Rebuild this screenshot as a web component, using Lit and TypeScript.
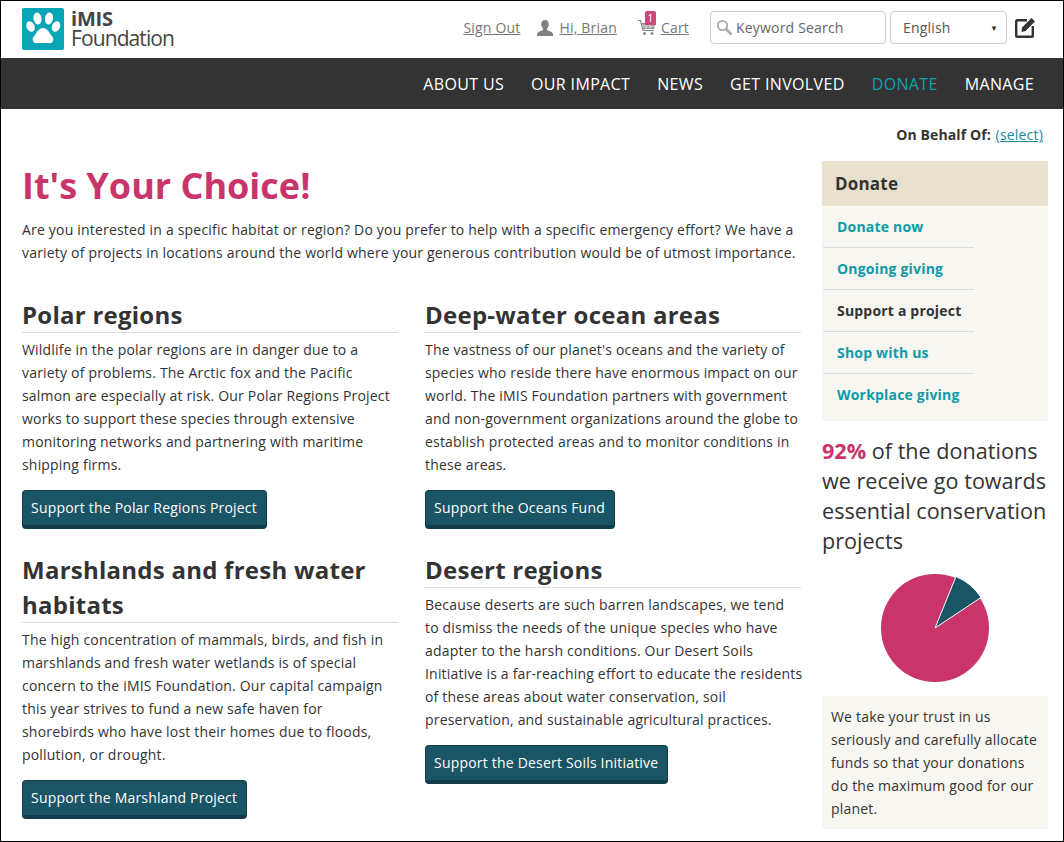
import { LitElement, html, css } from "lit";
import { customElement } from "lit/decorators.js";

const sections = [
  { h: "Polar regions", p: ["Wildlife in the polar regions are in danger due to a", "variety of problems. The Arctic fox and the Pacific", "salmon are especially at risk. Our Polar Regions Project", "works to support these species through extensive", "monitoring networks and partnering with maritime", "shipping firms."], b: "Support the Polar Regions Project" },
  { h: "Deep-water ocean areas", p: ["The vastness of our planet's oceans and the variety of", "species who reside there have enormous impact on our", "world. The iMIS Foundation partners with government", "and non-government organizations around the globe to", "establish protected areas and to monitor conditions in", "these areas."], b: "Support the Oceans Fund" },
  { h: "Marshlands and fresh water habitats", p: ["The high concentration of mammals, birds, and fish in", "marshlands and fresh water wetlands is of special", "concern to the iMIS Foundation. Our capital campaign", "this year strives to fund a new safe haven for", "shorebirds who have lost their homes due to floods,", "pollution, or drought."], b: "Support the Marshland Project" },
  { h: "Desert regions", p: ["Because deserts are such barren landscapes, we tend", "to dismiss the needs of the unique species who have", "adapter to the harsh conditions. Our Desert Soils", "Initiative is a far-reaching effort to educate the residents", "of these areas about water conservation, soil", "preservation, and sustainable agricultural practices."], b: "Support the Desert Soils Initiative" },
];
const navItems = ["ABOUT US", "OUR IMPACT", "NEWS", "GET INVOLVED", "DONATE", "MANAGE"];
const sideItems = ["Donate now", "Ongoing giving", "Support a project", "Shop with us", "Workplace giving"];

@customElement("app-root")
export class AppRoot extends LitElement {
  static styles = css`
    :host { display: block; width: 1064px; height: 842px; box-sizing: border-box; border: 1px solid #000; overflow: hidden; font-family: "Open Sans", sans-serif; font-size: 14px; letter-spacing: 0.19px; color: #333; background: #fff; }
    * { box-sizing: border-box; }
    a { color: inherit; }
    .top { height: 57px; display: flex; align-items: center; padding: 0 27px 4px 21px; }
    .logo { display: flex; align-items: center; gap: 7px; margin-top: 2px; }
    .logo-text { color: #444; }
    .logo-text b { display: block; font-size: 20px; line-height: 19px; letter-spacing: -0.2px; }
    .logo-text span { display: block; font-size: 21px; line-height: 20px; letter-spacing: -0.9px; }
    .util { margin-left: auto; display: flex; align-items: center; color: #777; }
    .util a { color: #777; }
    .signout { margin-right: 17px; }
    .hi { display: flex; align-items: center; gap: 6px; margin-right: 21px; }
    .cart { display: flex; align-items: center; gap: 5px; position: relative; margin-right: 21px; }
    .badge { position: absolute; left: 7px; top: -7px; width: 11px; height: 14px; background: #c9497a; color: #fff; font-size: 10px; letter-spacing: 0; line-height: 14px; text-align: center; border-radius: 2px 2px 0 0; }
    .search { width: 176px; height: 33px; border: 1px solid #ccc; border-radius: 4px; display: flex; align-items: center; padding-left: 5px; gap: 3px; margin-right: 4px; color: #666; }
    .select { width: 117px; height: 33px; border: 1px solid #ccc; border-radius: 4px; display: flex; align-items: center; justify-content: space-between; padding: 0 8px 0 12px; color: #555; margin-right: 8px; }
    .select i { font-style: normal; font-size: 8px; color: #333; }
    .nav { height: 51px; background: #333; display: flex; justify-content: flex-end; align-items: center; gap: 27px; padding-right: 29px; color: #fff; font-size: 16px; letter-spacing: 0.35px; }
    .nav .on { color: #12a0ad; }
    .behalf { text-align: right; padding: 16px 20px 0 0; height: 52px; line-height: 19px; }
    .behalf b { letter-spacing: 0.1px; }
    .behalf a { color: #1a8a99; margin-left: 1px; }
    .body { display: grid; grid-template-columns: 779px 226px; gap: 21px; padding-left: 21px; }
    h1 { margin: 0; font-size: 36px; line-height: 50px; color: #c9356a; font-weight: 700; letter-spacing: 0; }
    .intro { margin: 7px 0 0; line-height: 23px; }
    .cols { display: grid; grid-template-columns: 376px 376px; column-gap: 27px; margin-top: 33px; align-items: start; }
    .sec h2 { margin: 0; font-size: 24px; line-height: 35px; font-weight: 700; border-bottom: 1px solid #ddd; letter-spacing: 0.25px; }
    .sec p { margin: 5px 0 14px; line-height: 23px; white-space: nowrap; }
    .sec { padding-bottom: 23px; }
    .btn { display: inline-block; height: 39px; background: #1a5566; color: #fff; border: 1px solid #123d4a; border-bottom-width: 4px; border-radius: 4px; padding: 0 9px 0 8px; line-height: 34px; font-size: 14px; letter-spacing: 0.2px; }
    .side-h { background: #e8e1cd; height: 45px; line-height: 45px; padding-left: 13px; font-size: 17px; font-weight: 700; }
    .side-list { background: #f7f6f1; height: 215px; padding-left: 1px; }
    .side-list div { width: 151px; height: 42px; line-height: 41px; padding-left: 14px; font-weight: 700; color: #0f9aa8; border-bottom: 1px solid #ddd; }
    .side-list div:last-child { border-bottom: 0; }
    .side-list div.cur { color: #333; }
    .stat { margin: 15px 0 0; font-size: 21.6px; line-height: 30px; letter-spacing: 0; }
    .stat b { color: #c9356a; }
    .pie { display: flex; justify-content: center; margin: 17px 0 0; padding-right: 1px; }
    .trust { background: #f7f6f1; margin-top: 13px; padding: 9px 9px; line-height: 23px; height: 133px; }
  `;

  render() {
    return html`
      <div class="top">
        <div class="logo">
          <svg width="42" height="42" viewBox="0 0 42 42"><rect width="42" height="42" rx="2" fill="#0aa5b5"/>
            <g fill="#fff"><ellipse cx="8.500" cy="18.500" rx="4" ry="5.500" transform="rotate(-25 8.500 18.500)"/><ellipse cx="15.500" cy="10.500" rx="4" ry="6" transform="rotate(-10 15.500 10.500)"/><ellipse cx="27" cy="10.500" rx="4" ry="6" transform="rotate(10 27 10.500)"/><ellipse cx="34" cy="18.500" rx="4" ry="5.500" transform="rotate(25 34 18.500)"/><path d="M21 20c4 0 6 4 8 7 2 2 3 4 2 6-1 3-4 2-6 2h-8c-2 0-5 1-6-2-1-2 0-4 2-6 2-3 4-7 8-7z"/></g></svg>
          <div class="logo-text"><b>iMIS</b><span>Foundation</span></div>
        </div>
        <div class="util">
          <a class="signout" href="#">Sign Out</a>
          <span class="hi"><svg width="16" height="16" viewBox="0 0 16 16"><path fill="#808080" d="M8 0c2.500 0 3.800 1.800 3.800 4.300 0 1.900-.8 3.300-1.800 4.200v1.500l4.500 2.100c1 .5 1.500 1.500 1.500 3.900H0c0-2.400.5-3.400 1.500-3.900L6 10V8.500c-1-.9-1.800-2.300-1.800-4.200C4.200 1.800 5.500 0 8 0z"/></svg><a href="#">Hi, Brian</a></span>
          <span class="cart"><svg width="18" height="17" viewBox="0 0 18 17"><path fill="none" stroke="#888" stroke-width="1.200" d="M0 1.500h2.500L5 11.500h11"/><path fill="#888" d="M3.500 4h14l-1.500 6H5z"/><path stroke="#fff" stroke-width=".7" d="M4 6h13M4.500 8h12M8 4v6M12 4v6"/><circle cx="6.500" cy="14.500" r="1.500" fill="#888"/><circle cx="14" cy="14.500" r="1.500" fill="#888"/></svg><span class="badge">1</span><a href="#">Cart</a></span>
          <div class="search"><svg width="17" height="17" viewBox="0 0 17 17" fill="none" stroke="#aaa"><circle cx="6.500" cy="6.500" r="4.700" stroke-width="1.800"/><path d="M10 10l5.500 5.500" stroke-width="2.600"/></svg>Keyword Search</div>
          <div class="select">English<i>▼</i></div>
          <svg width="21" height="21" viewBox="0 0 21 21" fill="none" stroke="#333" stroke-width="2.400"><path d="M12 3.200H2.200a1 1 0 0 0-1 1V18.800a1 1 0 0 0 1 1H16.800a1 1 0 0 0 1-1V9"/><path fill="#333" stroke="none" d="M7 10.500L16.500 1l3.500 3.500L10.500 14 6.500 15z"/></svg>
        </div>
      </div>
      <div class="nav">${navItems.map((n) => html`<span class=${n === "DONATE" ? "on" : ""}>${n}</span>`)}</div>
      <div class="behalf"><b>On Behalf Of:</b> <a href="#">(select)</a></div>
      <div class="body">
        <div>
          <h1>It's Your Choice!</h1>
          <p class="intro">Are you interested in a specific habitat or region? Do you prefer to help with a specific emergency effort? We have a variety of projects in locations around the world where your generous contribution would be of utmost importance.</p>
          <div class="cols">
            ${sections.map((s) => html`<div class="sec"><h2>${s.h}</h2><p>${s.p.map((l) => html`${l}<br />`)}</p><a class="btn">${s.b}</a></div>`)}
          </div>
        </div>
        <aside>
          <div class="side-h">Donate</div>
          <div class="side-list">${sideItems.map((s) => html`<div class=${s === "Support a project" ? "cur" : ""}>${s}</div>`)}</div>
          <p class="stat"><b>92%</b> of the donations we receive go towards essential conservation projects</p>
          <div class="pie"><svg width="110" height="110" viewBox="0 0 110 110"><circle cx="55" cy="55" r="54" fill="#c9356a"/><path d="M55 55L76 3.500A54 54 0 0 1 101 24.500Z" fill="#1a5566" stroke="#fff" stroke-width="1"/></svg></div>
          <div class="trust">We take your trust in us seriously and carefully allocate funds so that your donations do the maximum good for our planet.</div>
        </aside>
      </div>
    `;
  }
}
